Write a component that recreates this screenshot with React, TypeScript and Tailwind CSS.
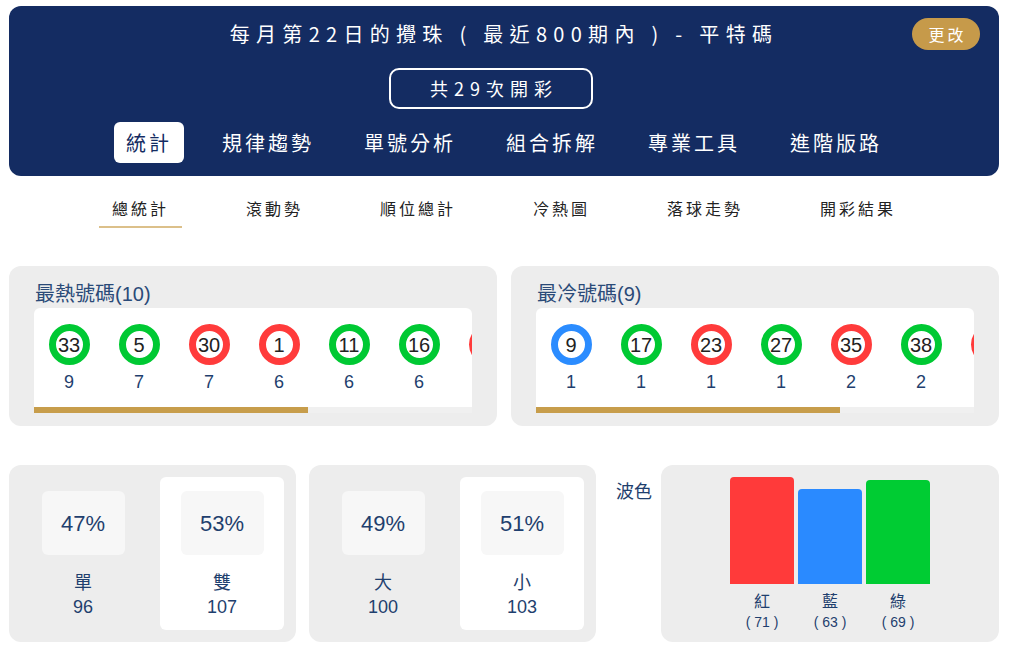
import React from "react";

const NAVY = "text-[#1f3f6e]";

type Ball = { n: number; c: "g" | "r" | "b"; cnt: number };

const hot: Ball[] = [
  { n: 33, c: "g", cnt: 9 },
  { n: 5, c: "g", cnt: 7 },
  { n: 30, c: "r", cnt: 7 },
  { n: 1, c: "r", cnt: 6 },
  { n: 11, c: "g", cnt: 6 },
  { n: 16, c: "g", cnt: 6 },
  { n: 2, c: "r", cnt: 5 },
  { n: 8, c: "r", cnt: 5 },
  { n: 21, c: "g", cnt: 5 },
  { n: 44, c: "g", cnt: 5 },
];

const cold: Ball[] = [
  { n: 9, c: "b", cnt: 1 },
  { n: 17, c: "g", cnt: 1 },
  { n: 23, c: "r", cnt: 1 },
  { n: 27, c: "g", cnt: 1 },
  { n: 35, c: "r", cnt: 2 },
  { n: 38, c: "g", cnt: 2 },
  { n: 46, c: "r", cnt: 2 },
  { n: 10, c: "b", cnt: 2 },
  { n: 42, c: "b", cnt: 2 },
];

const ringClass = (c: Ball["c"]) =>
  c === "g" ? "border-[#00c933]" : c === "r" ? "border-[#ff3b3b]" : "border-[#2b8cff]";

function BallCard({ title, balls, thumb }: { title: string; balls: Ball[]; thumb: number }) {
  return (
    <div className="w-[488px] shrink-0 rounded-[12px] bg-[#ededed] px-[25px] pb-[13px] pt-[15px]">
      <div className="mb-[1px] pl-[1px] text-[20px] leading-[26px] text-[#2a4a78]">{title}</div>
      <div className="w-[438px] overflow-hidden rounded-t-[6px] bg-white">
        <div className="flex pt-[16px]">
          {balls.map((b, i) => (
            <div key={i} className="flex w-[70px] shrink-0 flex-col items-center">
              <div
                className={`flex h-[41px] w-[41px] items-center justify-center rounded-full border-[7px] bg-white text-[20px] leading-none text-[#222] ${ringClass(b.c)}`}
              >
                {b.n}
              </div>
              <div className={`mt-[6px] text-[18px] leading-[22px] ${NAVY}`}>{b.cnt}</div>
            </div>
          ))}
        </div>
        <div className="mt-[14px] h-[6px] w-full bg-[#f0f0f0]">
          <div className="h-full bg-[#c79d4b]" style={{ width: `${thumb}%` }} />
        </div>
      </div>
    </div>
  );
}

function StatCol({ pct, label, num, white }: { pct: string; label: string; num: number; white?: boolean }) {
  return (
    <div
      className={`flex w-[124px] flex-col items-center rounded-[6px] pb-[11px] pt-[14px] ${white ? "bg-white" : ""}`}
    >
      <div className={`flex h-[64px] w-[83px] items-center justify-center rounded-[6px] bg-[#f7f7f7] text-[22px] ${NAVY}`}>
        {pct}
      </div>
      <div className={`mt-[16px] text-[18px] leading-[24px] ${NAVY}`}>{label}</div>
      <div className={`text-[18px] leading-[24px] ${NAVY}`}>{num}</div>
    </div>
  );
}

function StatCard({ a, b }: { a: [string, string, number]; b: [string, string, number] }) {
  return (
    <div className="flex w-[287px] shrink-0 justify-between rounded-[12px] bg-[#ededed] p-[12px]">
      <StatCol pct={a[0]} label={a[1]} num={a[2]} />
      <StatCol pct={b[0]} label={b[1]} num={b[2]} white />
    </div>
  );
}

const bars = [
  { label: "紅", v: 71, cls: "bg-[#ff3a3a]" },
  { label: "藍", v: 63, cls: "bg-[#2a8aff]" },
  { label: "綠", v: 69, cls: "bg-[#00cc33]" },
];

export default function App() {
  const tabs = ["統計", "規律趨勢", "單號分析", "組合拆解", "專業工具", "進階版路"];
  const subs = ["總統計", "滾動勢", "順位總計", "冷熱圖", "落球走勢", "開彩結果"];
  return (
    <div
      className="min-h-[668px] w-[1024px] overflow-hidden bg-white"
      style={{ fontFamily: '"Liberation Sans", "Noto Sans CJK TC", sans-serif' }}
    >
      <div className="ml-[9px] w-[990px] pt-[6px]">
        {/* Header */}
        <div
          className="rounded-[12px] bg-[#142c62] pb-[13px] pr-[19px] pt-[12px] text-white"
          style={{ fontFamily: '"Noto Sans CJK TC", "Noto Sans", sans-serif' }}
        >
          <div className="grid grid-cols-[1fr_auto_1fr] items-center pl-[19px]">
            <div />
            <div className="text-[20px] leading-[32px] tracking-[6.3px]">每月第22日的攪珠 ( 最近800期內 ) - 平特碼</div>
            <div className="flex justify-end">
              <div className="flex h-[32px] w-[68px] items-center justify-center rounded-full bg-[#c69a4a] pl-[3px] text-[16px] tracking-[3px]">
                更改
              </div>
            </div>
          </div>
          <div className="mt-[18px] flex justify-center pl-[19px] pr-[26px]">
            <div className="flex h-[41px] w-[204px] items-center justify-center rounded-[10px] border-2 border-white pl-[6px] text-[18px] tracking-[6px]">
              共29次開彩
            </div>
          </div>
          <div className="mt-[13px] flex justify-center gap-[26px] pl-[19px]">
            {tabs.map((t, i) => (
              <div
                key={t}
                className={`h-[41px] rounded-[6px] px-[12px] text-[20px] leading-[41px] tracking-[3px] ${
                  i === 0 ? "bg-white text-[#142c62]" : "text-white"
                }`}
              >
                {t}
              </div>
            ))}
          </div>
        </div>

        {/* Sub tabs */}
        <div
          className="mt-[20px] flex justify-center gap-[51px] text-[#222]"
          style={{ fontFamily: '"Noto Sans CJK TC", sans-serif' }}
        >
          {subs.map((s, i) => (
            <div
              key={s}
              className={`border-b-2 px-[13px] pb-[6px] text-[16px] leading-[24px] tracking-[3px] ${
                i === 0 ? "border-[#dcc08a]" : "border-transparent"
              }`}
            >
              {s}
            </div>
          ))}
        </div>

        {/* Hot / Cold */}
        <div className="mt-[38px] flex gap-[14px]">
          <BallCard title="最熱號碼(10)" balls={hot} thumb={62.5} />
          <BallCard title="最冷號碼(9)" balls={cold} thumb={69.4} />
        </div>

        {/* Bottom row */}
        <div className="mt-[39px] flex items-start">
          <StatCard a={["47%", "單", 96]} b={["53%", "雙", 107]} />
          <div className="w-[13px] shrink-0" />
          <StatCard a={["49%", "大", 100]} b={["51%", "小", 103]} />
          <div className={`ml-[20px] mt-[15px] w-[37px] shrink-0 text-[18px] leading-[24px] ${NAVY}`}>波色</div>
          <div className="ml-[8px] flex h-[177px] min-w-0 flex-1 justify-center rounded-[12px] bg-[#ededed] pt-[12px]">
            <div className="flex gap-[4px]">
              {bars.map((b) => (
                <div key={b.label} className="flex w-[64px] flex-col items-center">
                  <div className="flex h-[107px] w-full items-end">
                    <div className={`w-full rounded-t-[4px] ${b.cls}`} style={{ height: `${b.v * 1.507}px` }} />
                  </div>
                  <div className={`mt-[8px] text-[16px] leading-[20px] ${NAVY}`}>{b.label}</div>
                  <div className={`text-[14px] leading-[20px] ${NAVY}`}>( {b.v} )</div>
                </div>
              ))}
            </div>
          </div>
        </div>
      </div>
    </div>
  );
}
